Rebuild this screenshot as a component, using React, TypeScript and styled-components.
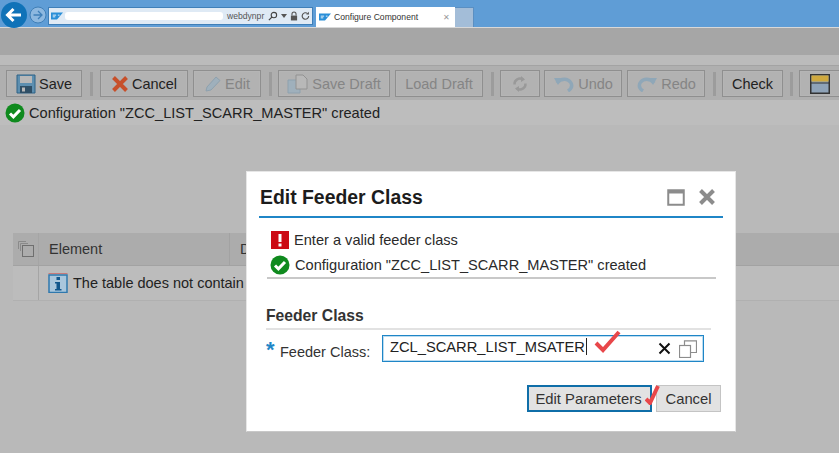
import React from 'react'
import styled, { createGlobalStyle } from 'styled-components';

const Global = createGlobalStyle`
  html, body { margin: 0; padding: 0; background: #b9b9b9; }
  body { font-family: "Liberation Sans", Arial, sans-serif; color: #222; }
`;

const Page = styled.div`
  position: relative;
  width: 839px;
  height: 453px;
  overflow: hidden;
  background: #b9b9b9;
`;

const BrowserBar = styled.div`
  height: 27px;
  background: #5f9dd6;
  border-bottom: 1px solid #d8d8d8;
  display: flex;
  align-items: flex-start;
  box-sizing: content-box;
`;

const NavButtons = styled.div`
  display: flex;
  align-items: center;
  height: 29px;
  width: 47px;
  padding-left: 1px;
  box-sizing: border-box;
  gap: 2px;
`;

const UrlBox = styled.div`
  margin-top: 7px;
  width: 261px;
  height: 16px;
  margin-left: 1px;
  background: #dfeaf5;
  border: 1px solid #3f7fb8;
  display: flex;
  align-items: center;
  font-size: 8.6px;
  color: #555;
  overflow: hidden;
  padding-left: 2px;
  box-sizing: content-box;
`;

const UrlBlur = styled.div`
  width: 158px;
  height: 8px;
  background: #fff;
  margin: 0 0 0 2px;
  border-radius: 3px;
  flex: none;
`;

const UrlText = styled.span`
  width: 37px;
  margin-left: 4px;
  white-space: nowrap;
  flex: none;
`;

const UrlIcons = styled.div`
  display: flex;
  align-items: center;
  gap: 3px;
  margin-left: 4px;
`;

const Tab = styled.div`
  margin: 7px 0 0 3px;
  width: 139px;
  height: 20px;
  background: #fff;
  display: flex;
  align-items: center;
  padding: 0 5px 0 3px;
  box-sizing: border-box;
  font-size: 8.6px;
  color: #333;
  gap: 3px;
`;

const TabClose = styled.span`
  margin-left: auto;
  color: #999;
  font-size: 8px;
`;

const NewTab = styled.div`
  margin-top: 7px;
  width: 18px;
  height: 19px;
  background: #a3bdd8;
  border: 1px solid #5a8fc2;
  border-bottom: 0;
  border-left: 0;
`;

const HeaderBand = styled.div`
  height: 27px;
  background: #a6a6a6;
`;

const SubBand = styled.div`
  height: 10px;
  background: #bbbbbb;
`;

const Toolbar = styled.div`
  height: 35px;
  background: #afafaf;
  border-top: 1px solid #a3a3a3;
  display: flex;
  align-items: center;
  padding: 1px 0 0 6px;
  box-sizing: border-box;
  white-space: nowrap;
`;

const ToolButton = styled.div<{ $w: number; $off?: boolean; $ml?: number }>`
  width: ${p => p.$w}px;
  margin-left: ${p => p.$ml ?? 0}px;
  flex: none;
  height: 27px;
  border: 1px solid #8f8f8f;
  box-shadow: inset 0 0 0 1px #b5b5b5;
  box-sizing: border-box;
  display: flex;
  align-items: center;
  justify-content: center;
  gap: 3px;
  font-size: 14.5px;
  color: ${p => (p.$off ? '#858585' : '#222')};
  background: #b2b2b2;
`;

const Sep = styled.div<{ $ml: number; $mr: number }>`
  flex: none;
  width: 3px;
  height: 24px;
  background: #9c9c9c;
  margin: 0 ${p => p.$mr}px 0 ${p => p.$ml}px;
`;

const MessageBar = styled.div`
  height: 25px;
  background: #bdbdbd;
  display: flex;
  align-items: center;
  padding-left: 5px;
  gap: 4px;
  font-size: 14.6px;
  color: #222;
`;

const Table = styled.div`
  margin: 108px 0 0 13px;
  width: 826px;
  border: 1px solid #b0b0b0;
  border-width: 0 0 1px 0;
`;

const HeadRow = styled.div`
  height: 33px;
  background: #acacac;
  border-bottom: 1px solid #a2a2a2;
  display: flex;
  align-items: center;
  box-sizing: border-box;
  font-size: 14.5px;
  color: #333;
`;

const BodyRow = styled.div`
  height: 34px;
  display: flex;
  align-items: center;
  background: #bcbcbc;
  font-size: 14.5px;
  color: #222;
`;

const SelectCell = styled.div`
  width: 26px;
  height: 100%;
  flex: none;
  border-right: 1px solid #a5a5a5;
  display: flex;
  align-items: center;
  justify-content: center;
  box-sizing: border-box;
`;

const ElementCell = styled.div`
  width: 191px;
  height: 100%;
  padding-left: 10px;
  box-sizing: border-box;
  border-right: 1px solid #a2a2a2;
  display: flex;
  align-items: center;
`;

const EmptyCell = styled.div`
  padding-left: 9px;
  box-sizing: border-box;
  display: flex;
  align-items: center;
  gap: 5px;
  white-space: nowrap;
  flex: none;
`;

const DescCell = styled.div`
  padding-left: 10px;
  white-space: nowrap;
  flex: none;
`;

const Dialog = styled.div`
  position: absolute;
  left: 246px;
  top: 171px;
  width: 490px;
  height: 261px;
  background: #fff;
  border: 1px solid #e6e6e6;
  border-bottom-color: #c8c8c8;
  box-sizing: border-box;
  padding: 0 12px;
`;

const DialogHead = styled.div`
  height: 38px;
  border-bottom: 2px solid #1f86c7;
  display: flex;
  align-items: center;
  padding: 6px 4px 0 1px;
  box-sizing: content-box;
`;

const DialogTitle = styled.div`
  font-size: 19.4px;
  font-weight: bold;
  color: #1c1c1c;
  flex: 1;
`;

const HeadIcons = styled.div`
  display: flex;
  align-items: center;
  gap: 13px;
  margin-right: 3px;
`;

const Messages = styled.div`
  margin: 12px 7px 0 8px;
  padding: 0 0 2px 3px;
  border-bottom: 2px solid #c8c8c8;
  display: flex;
  flex-direction: column;
  gap: 5px;
  font-size: 14.6px;
  color: #2a2a2a;
`;

const MessageRow = styled.div`
  height: 20px;
  display: flex;
  align-items: center;
  gap: 5px;
`;

const Section = styled.div`
  margin: 28px 12px 0 7px;
`;

const SectionTitle = styled.div`
  font-size: 15.7px;
  font-weight: bold;
  color: #333;
  padding-bottom: 3px;
  border-bottom: 2px solid #e2e2e2;
`;

const FieldRow = styled.div`
  margin-top: 5px;
  display: flex;
  align-items: center;
`;

const Star = styled.span`
  width: 14px;
  margin-top: 2px;
  color: #1f86c7;
  font-size: 22px;
  font-weight: bold;
  line-height: 20px;
  flex: none;
`;

const FieldLabel = styled.label`
  width: 102px;
  flex: none;
  font-size: 14.5px;
  color: #333;
  margin-top: 7px;
`;

const Field = styled.div`
  position: relative;
  width: 322px;
  height: 27px;
  flex: none;
  border: 1px solid #1f86c7;
  box-shadow: inset 0 0 0 1px #bcdcf0;
  box-sizing: border-box;
  display: flex;
  align-items: center;
  padding: 0 6px 4px 7px;
  font-size: 14.7px;
  color: #222;
`;

const Caret = styled.span`
  width: 1px;
  height: 17px;
  background: #222;
  margin-left: 1px;
`;

const FieldIcons = styled.div`
  margin-left: auto;
  display: flex;
  align-items: center;
  gap: 8px;
  margin-top: 4px;
`;

const Tick = styled.svg<{ $x: number; $y: number }>`
  position: absolute;
  left: ${p => p.$x}px;
  top: ${p => p.$y}px;
`;

const Actions = styled.div`
  position: relative;
  margin: 23px 2px 0 0;
  display: flex;
  justify-content: flex-end;
  gap: 4px;
`;

const ActionButton = styled.div<{ $w: number; $primary?: boolean }>`
  width: ${p => p.$w}px;
  height: 27px;
  box-sizing: border-box;
  background: #e2e2e2;
  border: ${p => (p.$primary ? '2px solid #0f6ea8' : '1px solid #c4c4c4')};
  display: flex;
  align-items: center;
  justify-content: center;
  font-size: 14.8px;
  color: #333;
`;

const ParamsLabel = styled.span`
  margin-right: 2px;
`;

const CheckIcon = ({ size = 20 }: { size?: number }) => (
  <svg width={size} height={size} viewBox='0 0 20 20'>
    <circle cx='10' cy='10' r='9.5' fill='#0f8a1e' />
    <path d='M5 10.5l3.4 3.4L15 7' fill='none' stroke='#fff' strokeWidth='3' />
  </svg>
);

const SapLogo = () => (
  <svg width='12' height='8' viewBox='0 0 14 8'>
    <path d='M0 0h14L7 8H0z' fill='#2a8fd8' />
    <path d='M2 3h4M2 5h3M8 3h2' stroke='#fff' strokeWidth='1' />
  </svg>
);

export default function App() {
  return (
    <Page>
      <Global />
      <BrowserBar>
        <NavButtons>
          <svg width='26' height='26' viewBox='0 0 26 26' style={{ flex: 'none' }}>
            <circle cx='13' cy='13' r='13' fill='#0f72b8' />
            <path d='M20 13H7M12.5 7L6.5 13l6 6' fill='none' stroke='#fff' strokeWidth='3' />
          </svg>
          <svg width='18' height='18' viewBox='0 0 18 18' style={{ flex: 'none' }}>
            <circle cx='9' cy='9' r='8' fill='#8db8e0' stroke='#3f7fb8' />
            <path d='M4.5 9h8M9 5l4 4-4 4' fill='none' stroke='#3f7fb8' strokeWidth='1.3' />
          </svg>
        </NavButtons>
        <UrlBox>
          <SapLogo />
          <UrlBlur />
          <UrlText>webdynpr</UrlText>
          <UrlIcons>
            <svg width='10' height='10' viewBox='0 0 11 11'>
              <circle cx='6.5' cy='4.5' r='3' fill='none' stroke='#444' strokeWidth='1.2' />
              <path d='M4.5 6.5L1 10' stroke='#444' strokeWidth='1.4' />
            </svg>
            <svg width='6' height='4' viewBox='0 0 6 4'><path d='M0 0h6L3 4z' fill='#555' /></svg>
            <svg width='8' height='10' viewBox='0 0 9 11'>
              <path d='M2.2 5V3.2a2.3 2.3 0 0 1 4.6 0V5' fill='none' stroke='#555' strokeWidth='1.2' />
              <rect x='1' y='5' width='7' height='5.5' fill='#555' />
            </svg>
            <svg width='9' height='10' viewBox='0 0 10 11'>
              <path d='M8.5 5.5a3.6 3.6 0 1 1-1.2-2.7' fill='none' stroke='#555' strokeWidth='1.3' />
              <path d='M8.8 0.8v3h-3z' fill='#555' />
            </svg>
          </UrlIcons>
        </UrlBox>
        <Tab>
          <SapLogo />
          <span>Configure Component</span>
          <TabClose>✕</TabClose>
        </Tab>
        <NewTab />
      </BrowserBar>
      <HeaderBand />
      <SubBand />
      <Toolbar>
        <ToolButton $w={76}>
          <svg width='20' height='20' viewBox='0 0 20 20'>
            <path d='M1 1h18v18H1z' fill='#5d8fb0' stroke='#2f6286' />
            <rect x='4' y='2' width='12' height='7' fill='#b8b8b8' />
            <rect x='4' y='12' width='12' height='7' fill='#2f4f66' />
            <rect x='6' y='13.5' width='3' height='4' fill='#b8b8b8' />
          </svg>
          Save
        </ToolButton>
        <Sep $ml={8} $mr={7} />
        <ToolButton $w={88}>
          <svg width='18' height='18' viewBox='0 0 18 18'>
            <path d='M2.5 2.5l13 13M15.5 2.5l-13 13' stroke='#c7502a' strokeWidth='4' />
          </svg>
          Cancel
        </ToolButton>
        <ToolButton $w={68} $off $ml={5}>
          <svg width='18' height='18' viewBox='0 0 18 18'>
            <path d='M2 16l1-4L12 2l4 3.5L7 15z' fill='#9fb0bc' stroke='#8ea1ae' />
          </svg>
          Edit
        </ToolButton>
        <Sep $ml={8} $mr={6} />
        <ToolButton $w={112} $off>
          <svg width='22' height='20' viewBox='0 0 22 20'>
            <path d='M1 6h12v13H1z' fill='#9fb0bc' stroke='#8ea1ae' />
            <path d='M9 1h7l4 4v10H9z' fill='#b8b8b8' stroke='#929292' />
          </svg>
          Save Draft
        </ToolButton>
        <ToolButton $w={88} $off $ml={5}>Load Draft</ToolButton>
        <Sep $ml={8} $mr={6} />
        <ToolButton $w={40} $off>
          <svg width='16' height='18' viewBox='0 0 16 18'>
            <path d='M2.5 9.5A5.5 5.5 0 0 1 11 4.5M13.5 8.5A5.5 5.5 0 0 1 5 13.5' fill='none' stroke='#999' strokeWidth='2.4' />
            <path d='M9 1l4 3.5-4 2.5zM7 17l-4-3.5L7 11z' fill='#999' />
          </svg>
        </ToolButton>
        <ToolButton $w={78} $off $ml={4}>
          <svg width='22' height='16' viewBox='0 0 22 16'>
            <path d='M4 7c4-5 11-5 14 0 1.500 3 0 6-3 8' fill='none' stroke='#8fa7b8' strokeWidth='3.4' />
            <path d='M1 2h8L5 9z' fill='#8fa7b8' />
          </svg>
          Undo
        </ToolButton>
        <ToolButton $w={78} $off $ml={5}>
          <svg width='22' height='16' viewBox='0 0 22 16'>
            <path d='M18 7C14 2 7 2 4 7c-1.500 3 0 6 3 8' fill='none' stroke='#8fa7b8' strokeWidth='3.4' />
            <path d='M21 2h-8l4 7z' fill='#8fa7b8' />
          </svg>
          Redo
        </ToolButton>
        <Sep $ml={8} $mr={6} />
        <ToolButton $w={61}>Check</ToolButton>
        <Sep $ml={7} $mr={6} />
        <ToolButton $w={60}>
          <svg width='20' height='20' viewBox='0 0 20 20' style={{ marginRight: 18 }}>
            <rect x='0.750' y='0.750' width='18.500' height='18.500' fill='#8fa3b8' stroke='#333' strokeWidth='1.500' />
            <rect x='1.500' y='1.500' width='17' height='6' fill='#cfa93f' />
            <path d='M1 9h18' stroke='#333' />
          </svg>
        </ToolButton>
      </Toolbar>
      <MessageBar>
        <CheckIcon />
        Configuration "ZCC_LIST_SCARR_MASTER" created
      </MessageBar>
      <Table>
        <HeadRow>
          <SelectCell>
            <svg width='18' height='18' viewBox='0 0 18 18'>
              <path d='M1.500 9V1.500H9M3.500 11V3.500H11' fill='none' stroke='#8a8a8a' />
              <rect x='5.500' y='5.500' width='11' height='11' fill='none' stroke='#6f6f6f' />
            </svg>
          </SelectCell>
          <ElementCell>Element</ElementCell>
          <DescCell>D</DescCell>
        </HeadRow>
        <BodyRow>
          <SelectCell />
          <EmptyCell>
            <svg width='20' height='20' viewBox='0 0 20 20' style={{ flex: 'none' }}>
              <path d='M0.500 0.500h19' stroke='#c77a7a' />
              <rect x='1' y='2' width='18' height='17.500' fill='#a9c6dc' stroke='#2f78ad' strokeWidth='1.500' />
              <rect x='8.500' y='4' width='3.500' height='3' fill='#12578c' />
              <path d='M7 9h5v7h1.500v1.500h-6.500V16h1.500v-5.500H7z' fill='#12578c' />
            </svg>
            The table does not contain
          </EmptyCell>
        </BodyRow>
      </Table>
      <Dialog>
        <DialogHead>
          <DialogTitle>Edit Feeder Class</DialogTitle>
          <HeadIcons>
            <svg width='18' height='17' viewBox='0 0 18 17'>
              <rect x='1.250' y='1.250' width='15.500' height='14.500' fill='none' stroke='#8c8c8c' strokeWidth='2' />
              <path d='M1 3h16' stroke='#8c8c8c' strokeWidth='3' />
            </svg>
            <svg width='18' height='18' viewBox='0 0 18 18'>
              <path d='M2.500 2.500l13 13M15.500 2.500l-13 13' stroke='#8c8c8c' strokeWidth='4' />
            </svg>
          </HeadIcons>
        </DialogHead>
        <Messages>
          <MessageRow>
            <svg width='18' height='18' viewBox='0 0 18 18' style={{ marginLeft: 1 }}>
              <rect width='18' height='18' fill='#cc0a14' />
              <rect x='7.500' y='3' width='3' height='8' fill='#fff' />
              <rect x='7.500' y='12.500' width='3' height='3' fill='#fff' />
            </svg>
            Enter a valid feeder class
          </MessageRow>
          <MessageRow>
            <CheckIcon />
            Configuration "ZCC_LIST_SCARR_MASTER" created
          </MessageRow>
        </Messages>
        <Section>
          <SectionTitle>Feeder Class</SectionTitle>
          <FieldRow>
            <Star>*</Star>
            <FieldLabel>Feeder Class:</FieldLabel>
            <Field>
              ZCL_SCARR_LIST_MSATER<Caret />
              <Tick $x={211} $y={-6} width='28' height='24' viewBox='0 0 28 24'>
                <path d='M2 13l7 7L25 2' fill='none' stroke='#e8474a' strokeWidth='4' />
              </Tick>
              <FieldIcons>
                <svg width='13' height='13' viewBox='0 0 13 13'>
                  <path d='M1.500 1.500l10 10M11.500 1.500l-10 10' stroke='#111' strokeWidth='2' />
                </svg>
                <svg width='18' height='18' viewBox='0 0 18 18'>
                  <rect x='0.500' y='5.500' width='11' height='12' fill='#fff' stroke='#8c8c8c' strokeWidth='1.200' />
                  <path d='M5.500 5V0.800h12v11.700H12' fill='none' stroke='#8c8c8c' strokeWidth='1.200' />
                </svg>
              </FieldIcons>
            </Field>
          </FieldRow>
        </Section>
        <Actions>
          <ActionButton $w={125} $primary>
            <ParamsLabel>Edit Parameters</ParamsLabel>
          </ActionButton>
          <ActionButton $w={65}>Cancel</ActionButton>
          <Tick $x={386} $y={0} width='18' height='20' viewBox='0 0 18 20'>
            <path d='M1 14l4 4L13 1' fill='none' stroke='#e8474a' strokeWidth='4' />
          </Tick>
        </Actions>
      </Dialog>
    </Page>
  );
}
